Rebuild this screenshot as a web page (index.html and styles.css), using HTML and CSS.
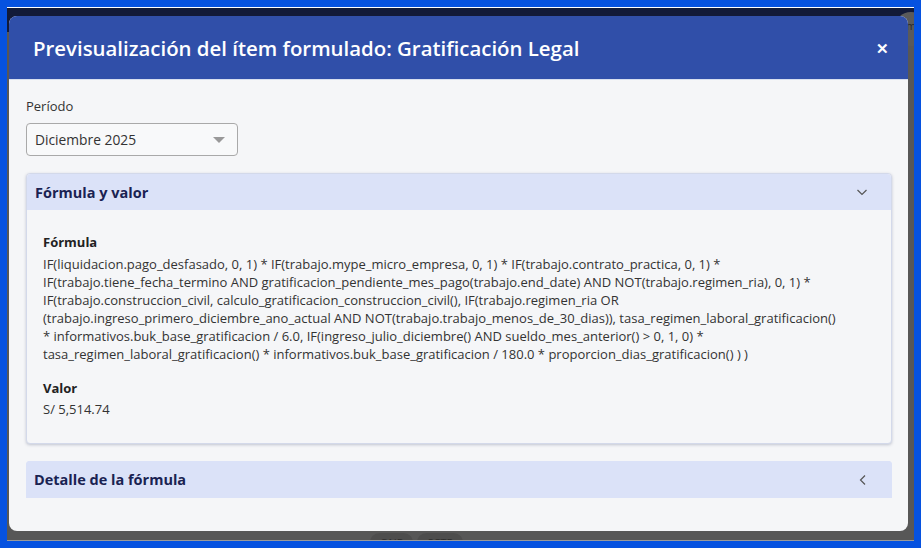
FILE: index.html
```html
<!DOCTYPE html>
<html lang="es">
<head>
    <meta charset="UTF-8">
    <meta name="viewport" content="width=device-width, initial-scale=1.0">
    <title>Previsualización</title>
    <link rel="stylesheet" href="styles.css">
</head>
<body>
    <div class="screen">
        <div class="navbar">
            <div class="avatar">Em</div>
        </div>
        <div class="page">
            <div class="chips">
                <span class="chip">ONP</span>
                <span class="chip">SCTR</span>
            </div>
        </div>

        <div class="overlay">
            <div class="modal">
                <div class="modal-header">
                    <h1 class="modal-title">Previsualización del ítem formulado: Gratificación Legal</h1>
                    <span class="close">&#x2715;</span>
                </div>
                <div class="modal-body">
                    <label class="field-label">Período</label>
                    <div class="select">
                        <span>Diciembre 2025</span>
                        <span class="caret"></span>
                    </div>

                    <div class="panel open">
                        <div class="panel-header">
                            <span>Fórmula y valor</span>
                            <svg class="chevron" width="12" height="12" viewBox="0 0 12 12">
                                <path d="M1.5 4 L6 8.5 L10.5 4" fill="none" stroke="#555" stroke-width="1.2"/>
                            </svg>
                        </div>
                        <div class="panel-body">
                            <div class="item-title">Fórmula</div>
                            <div class="formula">
                                IF(liquidacion.pago_desfasado, 0, 1) * IF(trabajo.mype_micro_empresa, 0, 1) * IF(trabajo.contrato_practica, 0, 1) *<br>
                                IF(trabajo.tiene_fecha_termino AND gratificacion_pendiente_mes_pago(trabajo.end_date) AND NOT(trabajo.regimen_ria), 0, 1) *<br>
                                IF(trabajo.construccion_civil, calculo_gratificacion_construccion_civil(), IF(trabajo.regimen_ria OR<br>
                                (trabajo.ingreso_primero_diciembre_ano_actual AND NOT(trabajo.trabajo_menos_de_30_dias)), tasa_regimen_laboral_gratificacion()<br>
                                * informativos.buk_base_gratificacion / 6.0, IF(ingreso_julio_diciembre() AND sueldo_mes_anterior() &gt; 0, 1, 0) *<br>
                                tasa_regimen_laboral_gratificacion() * informativos.buk_base_gratificacion / 180.0 * proporcion_dias_gratificacion() ) )
                            </div>
                            <div class="item-title value-title">Valor</div>
                            <div class="value">S/ 5,514.74</div>
                        </div>
                    </div>

                    <div class="panel">
                        <div class="panel-header">
                            <span>Detalle de la fórmula</span>
                            <svg class="chevron" width="12" height="12" viewBox="0 0 12 12">
                                <path d="M8 1.5 L3.5 6 L8 10.5" fill="none" stroke="#555" stroke-width="1.2"/>
                            </svg>
                        </div>
                    </div>
                </div>
            </div>
        </div>
    </div>
</body>
</html>
```

FILE: styles.css
```css
html, body {
    margin: 0;
    height: 100%;
}

body {
    background-color: #0652e0;
    padding: 7px 7px 7px 7px;
    box-sizing: border-box;
    font-family: "Open Sans", "Noto Sans", sans-serif;
}

.screen {
    position: relative;
    height: 100%;
    background-color: #575757;
    border-top: 1px solid #ffffff;
    border-bottom: 1px solid #9a9a9a;
    box-sizing: border-box;
    overflow: hidden;
}

.navbar {
    height: 24px;
    background-color: #121a38;
    display: flex;
    justify-content: flex-end;
}

.avatar {
    width: 34px;
    height: 34px;
    margin: 4px -14px 0 0;
    border-radius: 50%;
    background-color: #5a5a5a;
    color: #2a2a2a;
    font-size: 11px;
    line-height: 28px;
    padding-left: 6px;
    box-sizing: border-box;
}

.page {
    height: calc(100% - 24px);
    display: flex;
    align-items: flex-end;
}

.chips {
    display: flex;
    gap: 4px;
    margin: 0 0 -12px 363px;
}

.chip {
    background-color: #4d4d4d;
    color: #2c2c2c;
    border-radius: 10px;
    padding: 2px 10px;
    font-size: 11px;
}

.overlay {
    position: absolute;
    top: 0;
    left: 0;
    right: 0;
    bottom: 0;
}

.modal {
    margin: 8px 0 0 2px;
    width: 899px;
    height: 515px;
    background-color: #f5f6f8;
    border-radius: 8px;
    overflow: hidden;
    display: flex;
    flex-direction: column;
}

.modal-header {
    height: 63px;
    flex-shrink: 0;
    background-color: #304fa9;
    border-bottom: 1px solid #d7deef;
    display: flex;
    align-items: center;
    justify-content: space-between;
    padding: 0 19px 0 24px;
}

.modal-title {
    margin: 0;
    color: #ffffff;
    font-size: 20.4px;
    font-weight: 600;
}

.close {
    color: #ffffff;
    font-size: 15px;
    font-weight: 700;
}

.modal-body {
    padding: 17px 16px 0 17px;
}

.field-label {
    display: block;
    font-size: 13px;
    color: #333;
    line-height: 18px;
}

.select {
    margin-top: 8px;
    width: 212px;
    height: 33px;
    box-sizing: border-box;
    border: 1px solid #a9a9a9;
    border-radius: 4px;
    background-color: #f8f9fa;
    display: flex;
    align-items: center;
    justify-content: space-between;
    padding: 0 12px 0 8px;
    font-size: 13.8px;
    color: #333;
}

.caret {
    width: 0;
    height: 0;
    border-left: 6px solid transparent;
    border-right: 6px solid transparent;
    border-top: 6px solid #999;
}

.panel {
    margin-top: 17px;
    border-radius: 4px;
    background-color: #dbe2f8;
}

.panel.open {
    background-color: #f5f6f8;
    border: 1px solid #d3d9ea;
    box-shadow: 0 1px 3px rgba(40, 50, 90, 0.25);
}

.panel-header {
    height: 37px;
    background-color: #dbe2f8;
    border-radius: 4px 4px 0 0;
    display: flex;
    align-items: center;
    justify-content: space-between;
    padding: 0 23px 0 8px;
    font-size: 14.5px;
    font-weight: 700;
    color: #1a2252;
}

.panel.open .panel-header {
    height: 36px;
}

.panel-body {
    padding: 23px 16px 25px 16px;
    font-size: 13px;
    color: #333;
}

.item-title {
    font-weight: 700;
    line-height: 18px;
    color: #222;
}

.formula {
    margin-top: 4px;
    line-height: 18px;
    white-space: nowrap;
}

.value-title {
    margin-top: 16px;
}

.value {
    margin-top: 3px;
    line-height: 18px;
}
```
